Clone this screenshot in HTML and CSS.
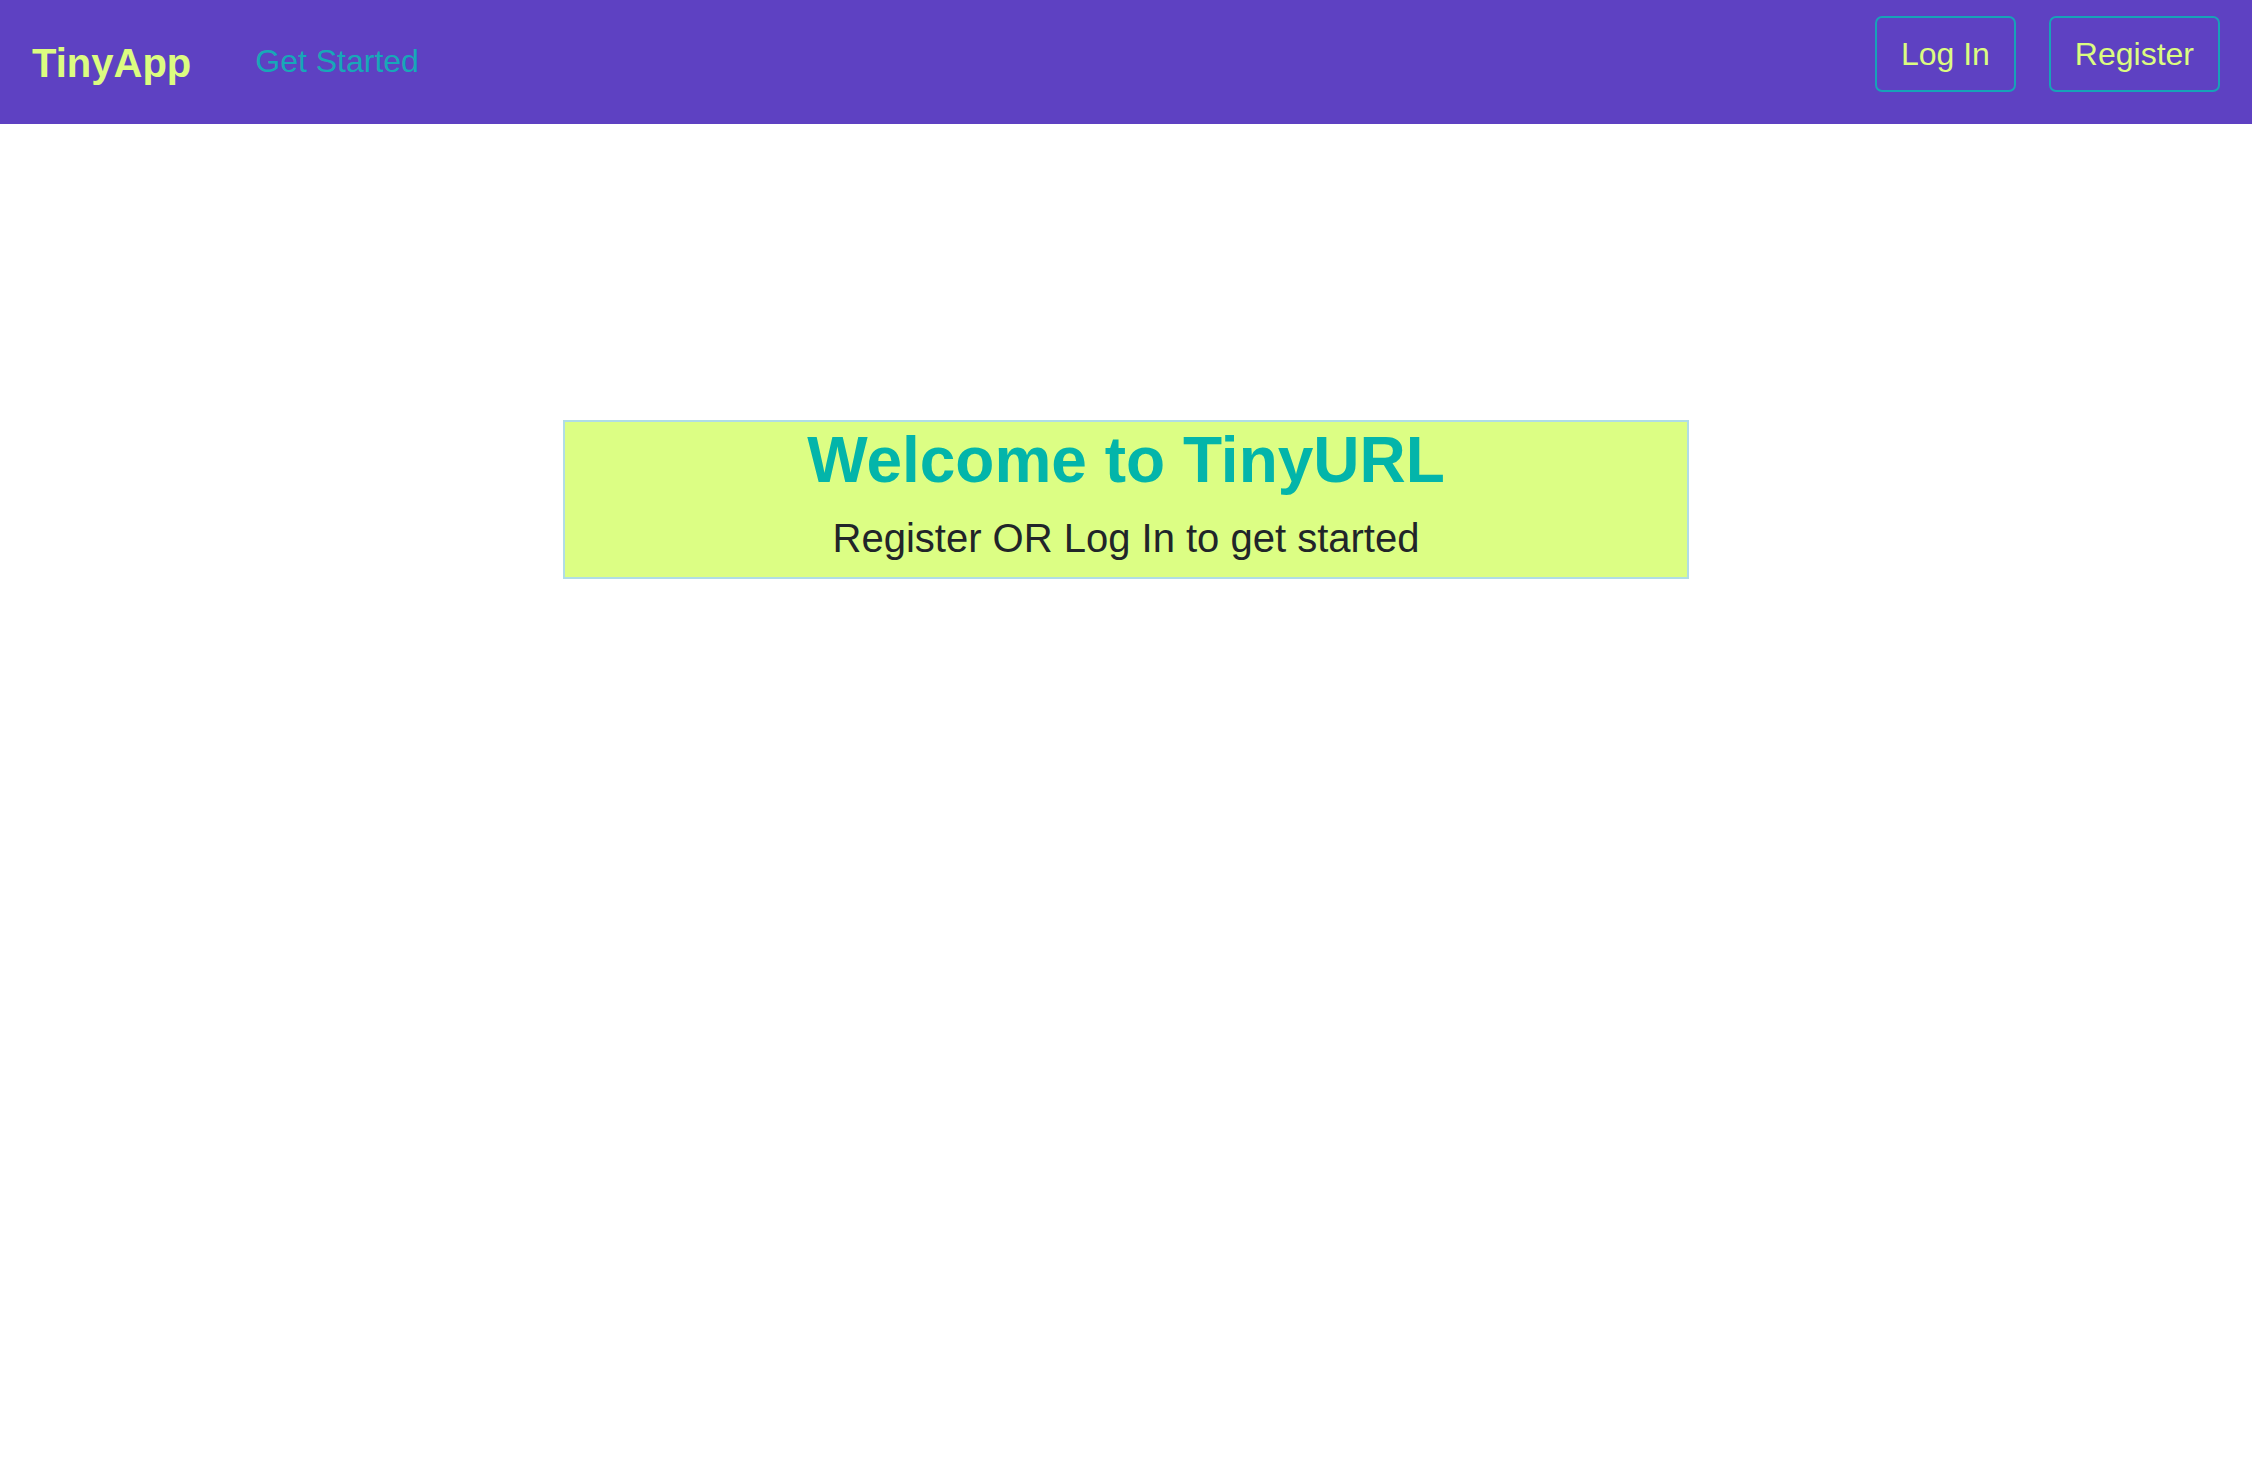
FILE: index.html
```html
<!DOCTYPE html>
<html lang="en">
<head>
<meta charset="utf-8">
<title>TinyApp</title>
<link rel="stylesheet" href="styles.css">
</head>
<body>
<nav class="navbar">
  <a class="brand" href="#">TinyApp</a>
  <a class="nav-link" href="#">Get Started</a>
  <div class="nav-right">
    <button class="btn">Log In</button>
    <button class="btn">Register</button>
  </div>
</nav>
<main class="main">
  <section class="welcome">
    <h1 class="welcome-title">Welcome to TinyURL</h1>
    <p class="welcome-sub">Register OR Log In to get started</p>
  </section>
</main>
</body>
</html>
```
FILE: styles.css
```css
html, body {
  margin: 0;
  padding: 0;
  background: #ffffff;
  font-family: "Liberation Sans", Arial, sans-serif;
}

.navbar {
  display: flex;
  align-items: flex-start;
  height: 124px;
  padding: 0 32px;
  background: #5e41c2;
  box-sizing: border-box;
}

.brand {
  margin-top: 33px;
  font-size: 40px;
  font-weight: bold;
  line-height: 60px;
  color: #dcfc80;
  text-decoration: none;
}

.nav-link {
  margin-top: 37px;
  margin-left: 64px;
  font-size: 32px;
  line-height: 48px;
  color: #17a8b8;
  text-decoration: none;
}

.nav-right {
  display: flex;
  gap: 33px;
  margin-left: auto;
  margin-top: 16px;
}

.btn {
  font-family: "Liberation Sans", Arial, sans-serif;
  font-size: 32px;
  line-height: 48px;
  padding: 12px 24px;
  background: transparent;
  color: #dcfc80;
  border: 2px solid #17a2b8;
  border-radius: 7px;
  cursor: pointer;
}

.main {
  padding-top: 296px;
}

.welcome {
  width: 50%;
  margin: 0 auto;
  box-sizing: border-box;
  padding: 2px 0 15px;
  background: #dcfe84;
  border: 2px solid #b0dde6;
  text-align: center;
}

.welcome-title {
  margin: 0;
  font-size: 64px;
  font-weight: bold;
  line-height: 72px;
  color: #03b5aa;
}

.welcome-sub {
  margin: 18px 0 0;
  font-size: 40px;
  line-height: 48px;
  color: #212529;
}
```
